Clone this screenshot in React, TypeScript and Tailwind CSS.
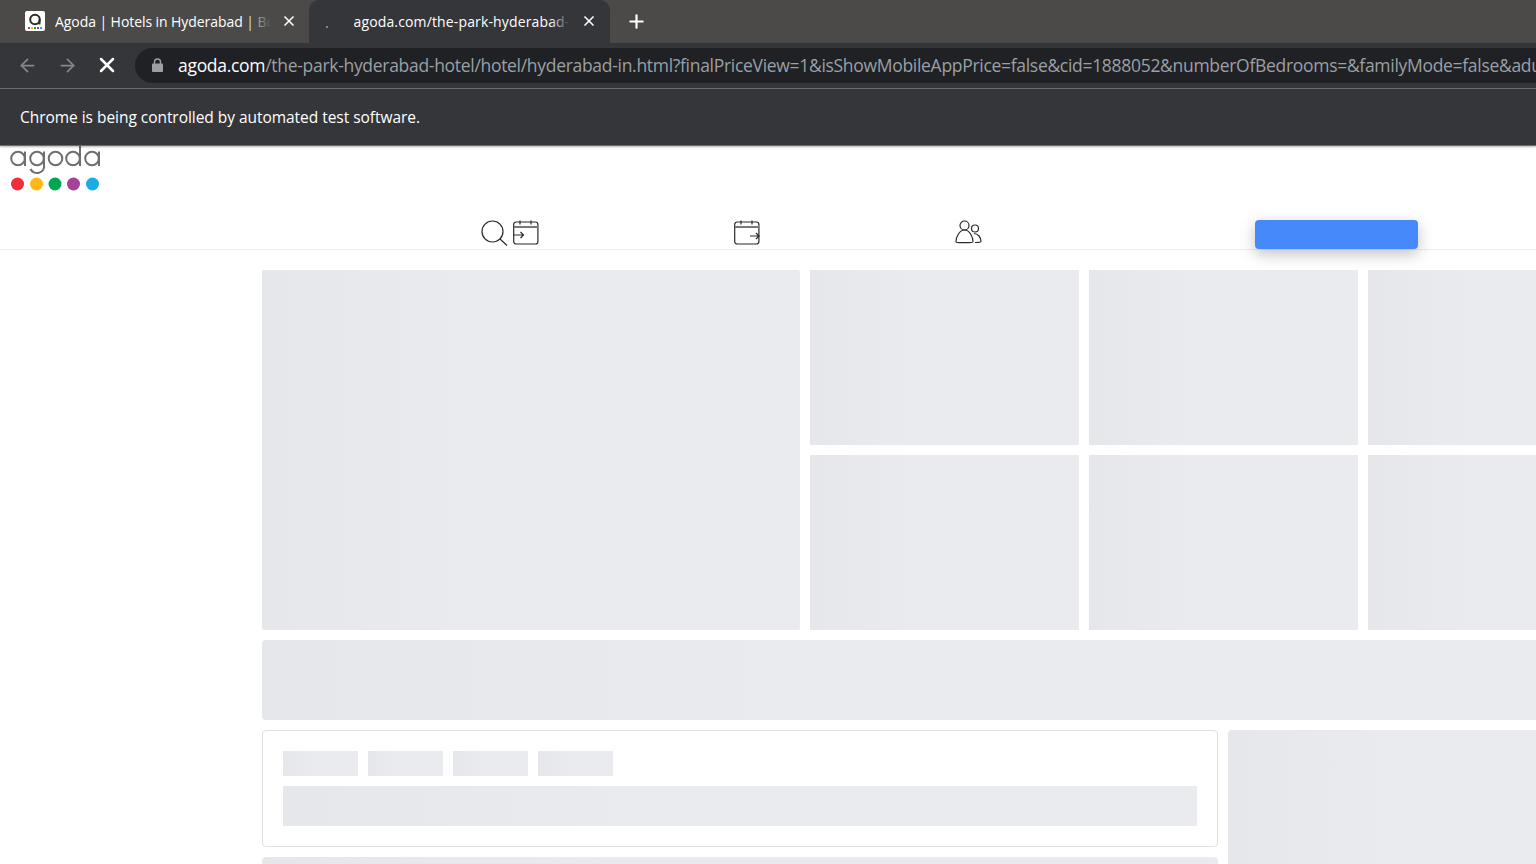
import { X, Plus, ArrowLeft, ArrowRight } from 'lucide-react';

const shimmer = 'bg-linear-to-r from-[#e6e7eb] to-[#eaebef] to-40%';

function BrowserChrome() {
    return (
        <div className="relative z-10 font-['Open_Sans',sans-serif] text-white shadow-[0_1px_2px_rgba(0,0,0,0.3)]">
            <div className="flex h-[43px] bg-[#4b4a48]">
                <div className="relative flex h-[43px] w-[309px] items-center pb-[1px] pl-[25px] pr-[12px]">
                    <svg width="20" height="20" viewBox="0 0 20 20" className="shrink-0">
                        <rect width="20" height="20" rx="2" fill="#fff" />
                        <circle cx="10" cy="8.5" r="4.8" fill="none" stroke="#2a2a2a" strokeWidth="2" />
                        <path d="M14.5 8.5v5" stroke="#2a2a2a" strokeWidth="2" />
                        <rect x="3" y="16" width="2" height="2" fill="#ee2e3b" />
                        <rect x="6" y="16" width="2" height="2" fill="#fdb813" />
                        <rect x="9" y="16" width="2" height="2" fill="#00a651" />
                        <rect x="12" y="16" width="2" height="2" fill="#a6419a" />
                        <rect x="15" y="16" width="2" height="2" fill="#1cace4" />
                    </svg>
                    <div className="relative ml-[10px] w-[218px] overflow-hidden whitespace-nowrap text-[14px] tracking-[-0.07px]">
                        Agoda | Hotels in Hyderabad | Best Price
                        <div className="absolute inset-y-0 right-0 w-[26px] bg-linear-to-r from-transparent to-[#4b4a48]" />
                    </div>
                    <X size={16} strokeWidth={2.5} className="ml-[10px] shrink-0" />
                </div>
                <div className="relative flex h-[43px] w-[301px] items-center rounded-t-[10px] bg-[#35363a] pb-[1px] pl-[44.5px]">
                    <div className="relative w-[216px] overflow-hidden whitespace-nowrap text-[14px] tracking-[0.14px]">
                        agoda.com/the-park-hyderabad-hotel
                        <div className="absolute inset-y-0 right-0 w-[20px] bg-linear-to-r from-transparent to-[#35363a]" />
                    </div>
                    <X size={16} strokeWidth={2.5} className="ml-[11px] shrink-0" />
                    <div className="absolute left-[17px] top-[26px] size-[2px] rounded-full bg-[#9aa0a6]" />
                </div>
                <div className="flex h-[43px] items-center pl-[16px]">
                    <Plus size={21} strokeWidth={2.5} />
                </div>
            </div>
            <div className="flex h-[46px] items-center border-b border-[#6b6c6f] bg-[#35363a] pb-[1px]">
                <ArrowLeft size={21} className="ml-[17px] text-[#85878a]" />
                <ArrowRight size={21} className="ml-[19px] text-[#85878a]" />
                <X size={24} strokeWidth={2.5} className="ml-[17px]" />
                <div className="ml-[16px] flex h-[35px] min-w-0 flex-1 items-center overflow-hidden rounded-l-[18px] bg-[#202124] pl-[17px]">
                    <svg width="11" height="14" viewBox="0 0 11 14" className="shrink-0">
                        <path d="M2.5 6V4a3 3 0 0 1 6 0v2" fill="none" stroke="#9aa0a6" strokeWidth="1.4" />
                        <rect y="5.5" width="11" height="8.5" rx="1" fill="#9aa0a6" />
                    </svg>
                    <div className="ml-[15px] whitespace-nowrap text-[17.5px] tracking-[-0.3px] text-[#9aa0a6]">
                        <span className="text-white">agoda.com</span>
                        /the-park-hyderabad-hotel/hotel/hyderabad-in.html?finalPriceView=1&amp;isShowMobileAppPrice=false&amp;cid=1888052&amp;numberOfBedrooms=&amp;familyMode=false&amp;adults=2
                    </div>
                </div>
            </div>
            <div className="flex h-[57px] items-center border-b border-[#6b6c6f] bg-[#35363a] pl-[20px] pt-[1px] text-[15.5px] tracking-[-0.04px]">
                Chrome is being controlled by automated test software.
            </div>
        </div>
    );
}

function AgodaLogo() {
    return (
        <svg width="110" height="46" viewBox="0 0 110 46" role="img" aria-label="agoda">
            <g fill="none" stroke="#6e6e6e" strokeWidth="2">
                <circle cx="18" cy="12.5" r="6.8" />
                <path d="M25 5.5v14.5" />
                <circle cx="37" cy="12.5" r="6.8" />
                <path d="M44 5.5v14.5a7 6 0 0 1-13.5 3" />
                <circle cx="55.5" cy="12.5" r="6.8" />
                <circle cx="73" cy="12.5" r="6.8" />
                <path d="M80 0v20" />
                <circle cx="92" cy="12.5" r="6.8" />
                <path d="M99 5.5v14.5" />
            </g>
            <circle cx="17.5" cy="38" r="6.5" fill="#ee2e3b" />
            <circle cx="36.5" cy="38" r="6.5" fill="#fdb813" />
            <circle cx="55" cy="38" r="6.5" fill="#00a651" />
            <circle cx="73.5" cy="38" r="6.5" fill="#a6419a" />
            <circle cx="92.5" cy="38" r="6.5" fill="#1cace4" />
        </svg>
    );
}

function CalendarIcon({ arrow }: { arrow: 'in' | 'out' }) {
    return (
        <svg width="27" height="27" viewBox="0 0 27 27" fill="none" stroke="#2a2a2e" strokeWidth="1.2">
            <rect x="0.7" y="2" width="24.2" height="22" rx="2.5" />
            <path d="M1 7h24" stroke="#77787c" strokeWidth="2" />
            <path d="M7 0.5v4M18 0.5v4" />
            {arrow === 'in' ? (
                <path d="M1 15h9M7.5 12l3 3-3 3" />
            ) : (
                <path d="M16 16h9M22 13l3 3-3 3" />
            )}
        </svg>
    );
}

function Header() {
    return (
        <div className="h-[104px] border-b border-[#ebecee]">
            <div className="h-[74px]">
                <AgodaLogo />
            </div>
            <div className="flex h-[29px] items-start pl-[481px]">
                <svg width="27" height="27" viewBox="0 0 27 27" fill="none" stroke="#2a2a2e" strokeWidth="1.2">
                    <circle cx="11.5" cy="11.5" r="10.5" />
                    <path d="M19 19l7 6.5" />
                </svg>
                <div className="ml-[5px]">
                    <CalendarIcon arrow="in" />
                </div>
                <div className="ml-[194px]">
                    <CalendarIcon arrow="out" />
                </div>
                <svg width="27" height="27" viewBox="0 0 27 27" fill="none" stroke="#2a2a2e" strokeWidth="1.2" className="ml-[194px]">
                    <circle cx="9.5" cy="5.5" r="4.5" />
                    <path d="M1 22c0-6 4-12 8.5-12S18 16 18 22c0 1-17 1-17 0z" />
                    <circle cx="20" cy="8.5" r="3.5" />
                    <path d="M19 13.5c4 0 7 4 7 8 0 1-3 1-6 1" />
                </svg>
                <div className="ml-[273px] h-[29px] w-[163px] rounded-[4px] bg-[#4589fb] shadow-[0_5px_15px_rgba(0,0,0,0.25)]" />
            </div>
        </div>
    );
}

function Gallery() {
    return (
        <div className="flex h-[360px] gap-[10px]">
            <div className={`w-[538px] shrink-0 rounded-[2px] ${shimmer}`} />
            {[0, 1, 2].map((col) => (
                <div key={col} className="flex w-[269px] shrink-0 flex-col gap-[10px]">
                    <div className={`h-[175px] ${shimmer}`} />
                    <div className={`h-[175px] ${shimmer}`} />
                </div>
            ))}
        </div>
    );
}

export default function App() {
    return (
        <div className="h-[864px] w-[1536px] overflow-hidden bg-white">
            <BrowserChrome />
            <Header />
            <div className="w-[1376px] pl-[262px] pt-[20px]">
                <Gallery />
                <div className={`mt-[10px] h-[80px] w-[1376px] rounded-[4px] ${shimmer}`} />
                <div className="mt-[10px] flex w-[1376px] gap-[10px]">
                    <div className="w-[956px] shrink-0">
                        <div className="h-[117px] rounded-[4px] border border-[#dfe0e2] px-[20px] pt-[20px]">
                            <div className="flex gap-[10px]">
                                {[0, 1, 2, 3].map((i) => (
                                    <div key={i} className={`h-[25px] w-[75px] ${shimmer}`} />
                                ))}
                            </div>
                            <div className={`mt-[10px] h-[40px] w-[914px] ${shimmer}`} />
                        </div>
                        <div className={`mt-[10px] h-[40px] rounded-[4px] ${shimmer}`} />
                    </div>
                    <div className={`h-[200px] flex-1 rounded-[4px] ${shimmer}`} />
                </div>
            </div>
        </div>
    );
}
